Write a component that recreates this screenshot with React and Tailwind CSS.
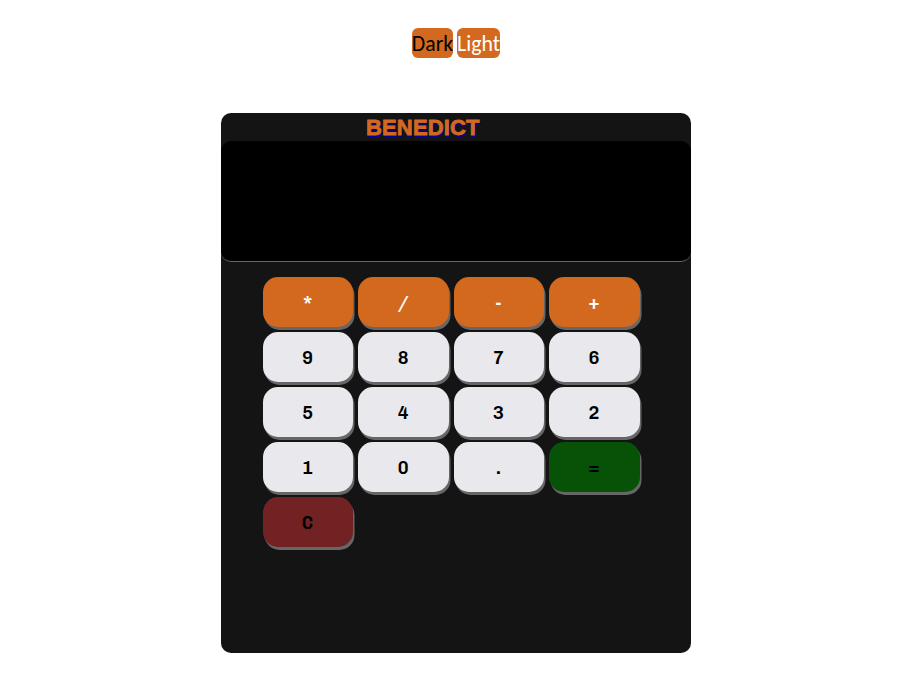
const keys = ['*', '/', '-', '+', '9', '8', '7', '6', '5', '4', '3', '2', '1', '0', '.', '=', 'C'];

function keyColor(key) {
  if (key === '*' || key === '+') return 'bg-[#d2691e] text-white font-bold';
  if (key === '/' || key === '-') return 'bg-[#d2691e] text-white font-semibold';
  if (key === '=') return 'bg-[#075207] text-black font-bold';
  if (key === 'C') return 'bg-[#722222] text-black font-semibold';
  return 'bg-[#e9e8ed] text-black font-semibold';
}

export default function App() {
  return (
    <div className="flex w-[912px] justify-center">
      <div className="flex w-[470px] flex-col items-center pt-[28px]">
        <div className="flex gap-1 font-['Carlito',sans-serif] text-[21.8px] leading-[30px]">
          <button className="h-[30px] w-[41px] rounded-[6px] bg-[#d2691e] text-black"><span className="-mx-1 block pt-px">Dark</span></button>
          <button className="h-[30px] w-[43px] rounded-[6px] bg-[#d2691e] text-white"><span className="-mx-1 block pt-px">Light</span></button>
        </div>
        <main className="mt-[55px] h-[540px] w-[470px] rounded-[10px] bg-[#141414]">
          <h1 className="h-7 pl-[145px] font-['Liberation_Sans',sans-serif] text-[22px] font-bold leading-[30px] tracking-[0.15px] text-[#d2691e] [-webkit-text-stroke:0.8px_#d2691e] [text-shadow:1px_2px_#00009b]">BENEDICT</h1>
          <div className="h-[121px] rounded-[10px] border-b border-[#666] bg-black"></div>
          <div className="ml-[42px] mt-[15px] grid w-[377px] grid-cols-[repeat(4,90.4px)] gap-x-[5px] gap-y-[5px]">
            {keys.map((key) => (
              <button key={key} className={`h-[50px] rounded-[15px] pr-[1px] pt-[2px] font-['Chivo_Mono','Liberation_Mono',monospace] text-[18px] shadow-[1.5px_3px_#666] ${keyColor(key)}`}>{key}</button>
            ))}
          </div>
        </main>
      </div>
    </div>
  );
}
